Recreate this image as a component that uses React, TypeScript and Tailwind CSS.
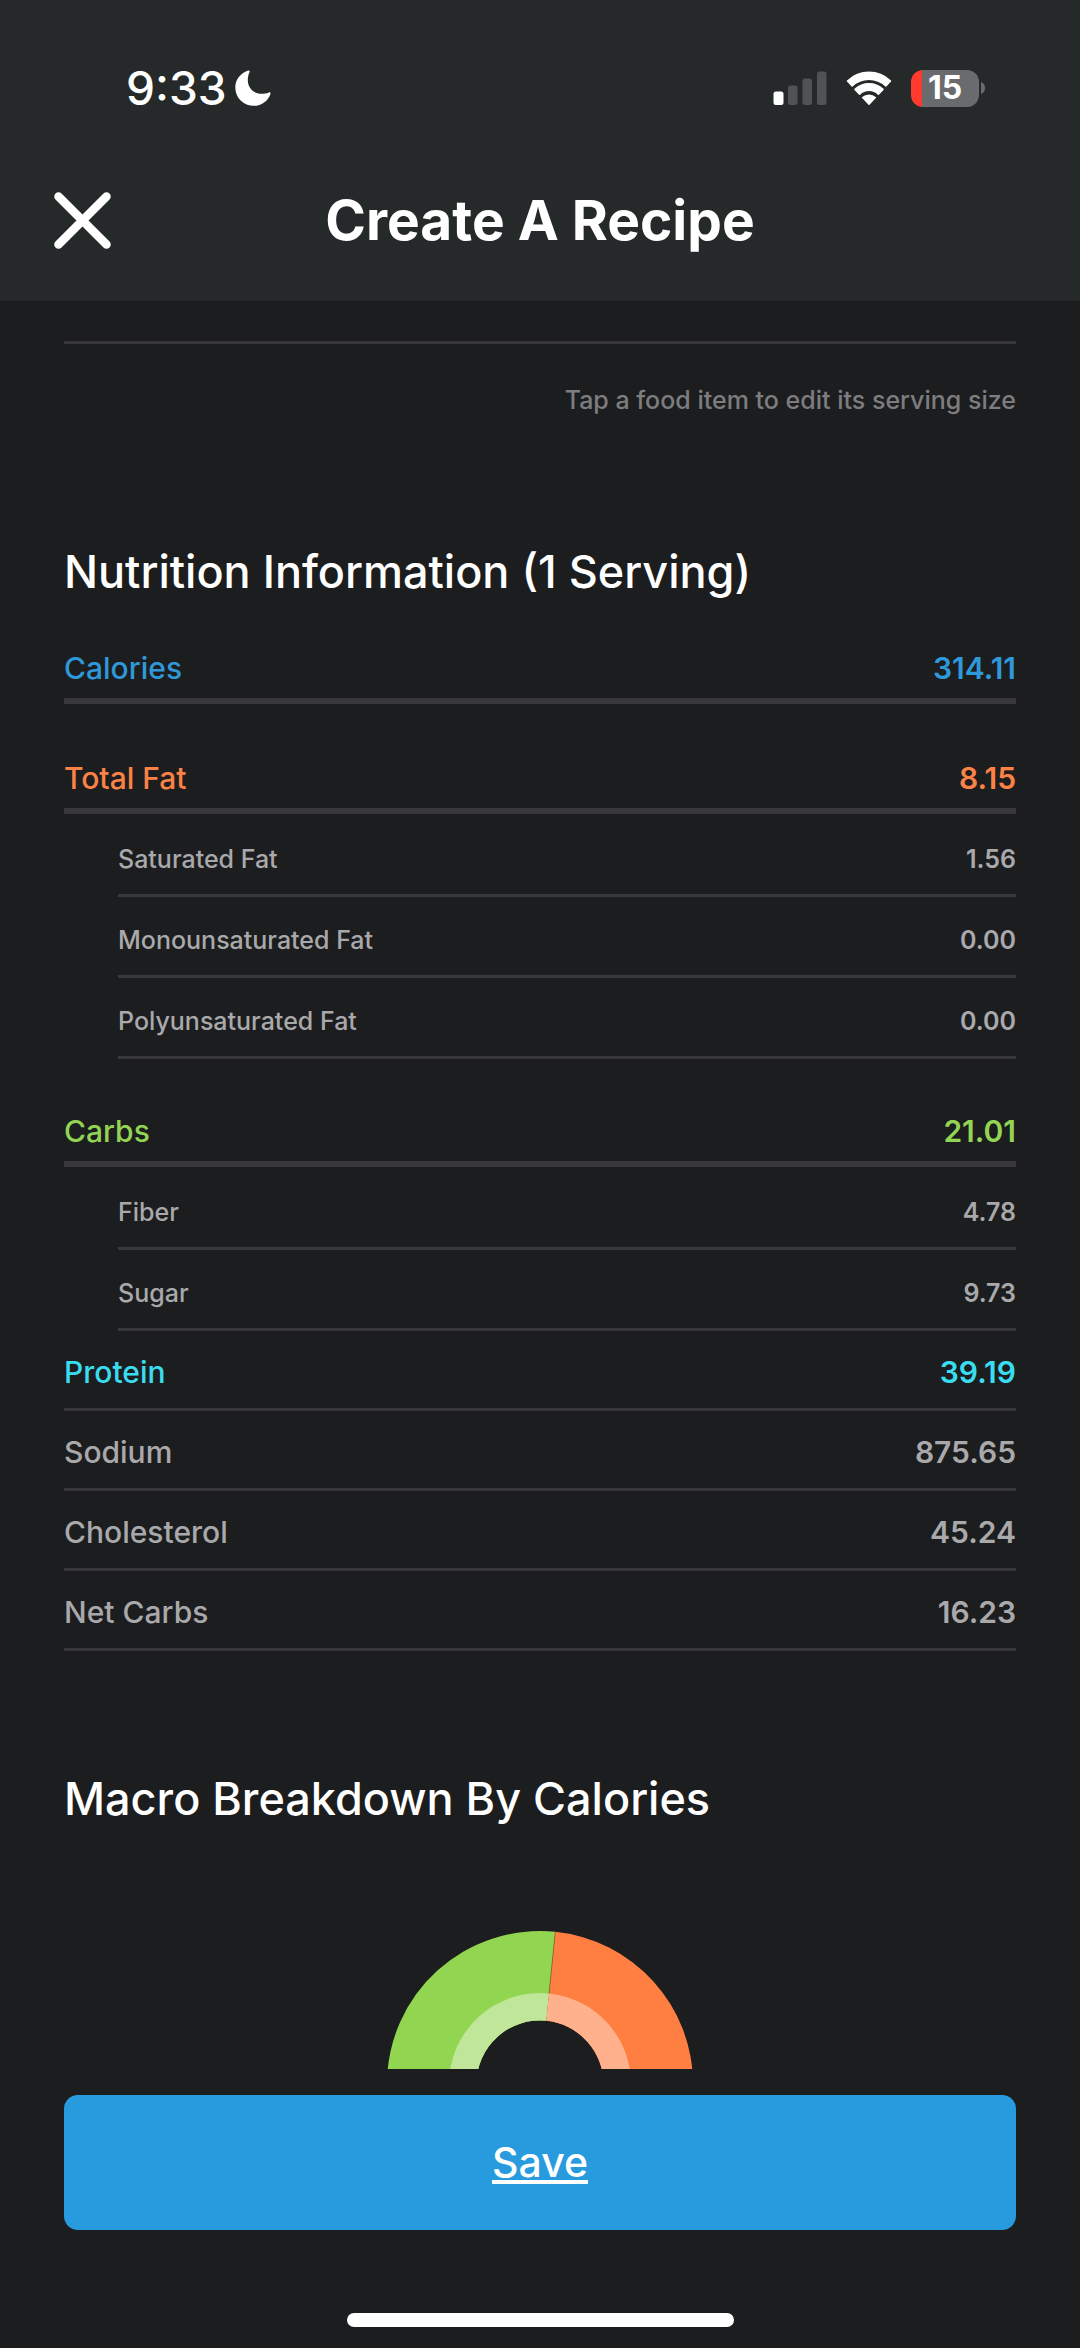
type RowKind = 'group' | 'sub' | 'plain';

interface NutritionRow {
  label: string;
  value: string;
  kind: RowKind;
  color: string;
}

const muted = 'text-[#a9a9ab]';

const rows: NutritionRow[] = [
  { label: 'Calories', value: '314.11', kind: 'group', color: 'text-[#2f98d9]' },
  { label: 'Total Fat', value: '8.15', kind: 'group', color: 'text-[#fb8247]' },
  { label: 'Saturated Fat', value: '1.56', kind: 'sub', color: muted },
  { label: 'Monounsaturated Fat', value: '0.00', kind: 'sub', color: muted },
  { label: 'Polyunsaturated Fat', value: '0.00', kind: 'sub', color: muted },
  { label: 'Carbs', value: '21.01', kind: 'group', color: 'text-[#94d455]' },
  { label: 'Fiber', value: '4.78', kind: 'sub', color: muted },
  { label: 'Sugar', value: '9.73', kind: 'sub', color: muted },
  { label: 'Protein', value: '39.19', kind: 'plain', color: 'text-[#3adcf0]' },
  { label: 'Sodium', value: '875.65', kind: 'plain', color: muted },
  { label: 'Cholesterol', value: '45.24', kind: 'plain', color: muted },
  { label: 'Net Carbs', value: '16.23', kind: 'plain', color: muted },
];

const cellStyles: Record<RowKind, string> = {
  group: 'border-b-6 border-[#38383a] pt-[52px] pb-[10px] text-[30px] leading-[40px]',
  sub: 'border-b-3 border-[#38383a] pt-[27px] pb-[19px] text-[25px] leading-[32px]',
  plain: 'border-b-3 border-[#38383a] pt-[21px] pb-[16px] text-[30px] leading-[40px]',
};

function MoonIcon() {
  return (
    <svg width="36" height="36" viewBox="0 0 36 36" fill="currentColor" aria-hidden="true">
      <path d="M13.2.6C5 3.5.3 10 .3 17.5.3 28 8.5 35.8 19 35.8c7.500 0 13.800-4.800 16.400-11.600.4-1.400-.4-2.200-1.600-1.800-2.300 1-4.800 1.400-7 1.400-8.300 0-14-5.800-14-13.800 0-3 .6-5.500 1.700-7.800.5-1.200-.1-1.900-1.300-1.600Z" />
    </svg>
  );
}

function SignalIcon() {
  return (
    <svg width="54" height="34" viewBox="0 0 54 34" aria-label="Signal">
      <rect x="0.500" y="20.500" width="10" height="13.500" rx="2.500" fill="#fff" />
      <rect x="15" y="14.500" width="9.500" height="19.500" rx="2.500" fill="#505354" />
      <rect x="29.500" y="7.500" width="9.500" height="26.500" rx="2.500" fill="#505354" />
      <rect x="44" y="0.500" width="9.500" height="33.500" rx="2.500" fill="#505354" />
    </svg>
  );
}

function WifiIcon() {
  return (
    <svg
      width="46"
      height="34"
      viewBox="0 0 46 34"
      fill="currentColor"
      stroke="currentColor"
      strokeWidth="1.5"
      strokeLinejoin="round"
      aria-label="Wi-Fi"
    >
      <path d="M1.500 10A31 31 0 0 1 44.500 10L39.800 15A24.400 24.400 0 0 0 6.200 15Z" />
      <path d="M9 18.400A20 20 0 0 1 37 18.400L32.400 23.200A13.400 13.400 0 0 0 13.600 23.200Z" />
      <path d="M16.700 26.600A9.500 9.500 0 0 1 29.300 26.600L23 33.200Z" />
    </svg>
  );
}

function Battery() {
  return (
    <div className="flex items-center gap-0.5">
      <div className="flex h-[37px] w-[68px] items-center justify-center rounded-[12px] bg-linear-to-r from-[#ff3b30] from-[11px] to-[#6a6b6e] to-[11px] text-[32px] leading-none font-bold">
        15
      </div>
      <svg width="4" height="12" viewBox="0 0 4 12" aria-hidden="true">
        <path d="M0 0C2.500 1 4 3.300 4 6S2.500 11 0 12Z" fill="#6a6b6e" />
      </svg>
    </div>
  );
}

function StatusBar() {
  return (
    <div className="flex h-14 items-center justify-between pr-[41px] pl-[72px]">
      <div className="flex items-center gap-2">
        <span className="text-[46px] leading-none font-medium">9:33</span>
        <MoonIcon />
      </div>
      <div className="flex items-center gap-[19px]">
        <SignalIcon />
        <WifiIcon />
        <Battery />
      </div>
    </div>
  );
}

function Header() {
  return (
    <header className="bg-[#25292a] px-[54px] pt-[60px] pb-[49px]">
      <StatusBar />
      <div className="mt-[72px] grid grid-cols-[57px_1fr_57px] items-center">
        <button type="button" aria-label="Close">
          <svg width="57" height="57" viewBox="0 0 57 57" stroke="currentColor" strokeWidth="8.500" strokeLinecap="round">
            <path d="M4.500 4.500l48 48M52.500 4.500l-48 48" />
          </svg>
        </button>
        <h1 className="text-center text-[55px] leading-[64px] font-bold">Create A Recipe</h1>
      </div>
    </header>
  );
}

function NutritionTable() {
  return (
    <table className="w-full border-separate border-spacing-0">
      {rows.map((row) => (
        <tbody key={row.label} className={row.color}>
          <tr>
            {row.kind === 'sub' && <td className="w-[54px] p-0" />}
            <th scope="row" colSpan={row.kind === 'sub' ? 1 : 2} className={`${cellStyles[row.kind]} text-left font-medium`}>
              {row.label}
            </th>
            <td className={`${cellStyles[row.kind]} text-right font-semibold`}>{row.value}</td>
          </tr>
          {row.kind === 'group' && (
            <tr aria-hidden="true">
              <td colSpan={3} className="h-0.5 p-0" />
            </tr>
          )}
        </tbody>
      ))}
    </table>
  );
}

// Only the upper part of the donut is scrolled into view above the save bar.
function MacroChart() {
  return (
    <svg className="mx-auto block" width="306" height="138" viewBox="0 0 306 138" role="img" aria-label="Macro Breakdown By Calories">
      <path d="M0 153A153 153 0 0 1 168.300 .8L159.300 89.800A63.500 63.500 0 0 0 89.500 153Z" fill="#92d551" />
      <path d="M62 153A91 91 0 0 1 162.100 62.500L159.300 89.800A63.500 63.500 0 0 0 89.500 153Z" fill="#bfe699" />
      <path d="M168.300 .8A153 153 0 0 1 306 153L216.500 153A63.500 63.500 0 0 0 159.300 89.800Z" fill="#fe7f41" />
      <path d="M162.100 62.500A91 91 0 0 1 244 153L216.500 153A63.500 63.500 0 0 0 159.300 89.800Z" fill="#ffb08c" />
      <path d="M168.300 .8L162.100 62.500" stroke="#8a6a2a" strokeWidth="0.800" />
    </svg>
  );
}

export default function App() {
  return (
    <div className="flex min-h-screen flex-col bg-[#1c1d1e] font-['Inter',sans-serif] text-white">
      <Header />

      <main className="px-16 pt-10">
        <hr className="border-t-3 border-[#38383a]" />
        <p className="mt-10 text-right text-[25px] leading-[32px] font-medium text-[#7d7d80]">
          Tap a food item to edit its serving size
        </p>

        <section className="mt-[134px]">
          <h2 className="mb-0.5 text-[45px] leading-[44px] font-medium">Nutrition Information (1 Serving)</h2>
          <NutritionTable />
        </section>

        <section className="mt-[126px]">
          <h2 className="text-[45px] leading-[44px] font-medium">Macro Breakdown By Calories</h2>
          <div className="mt-[110px]">
            <MacroChart />
          </div>
        </section>
      </main>

      <footer className="mt-auto px-16 pt-6 pb-[21px]">
        <button
          type="button"
          className="flex h-[135px] w-full items-center justify-center rounded-[14px] bg-[#289bdf] pb-0.5 text-[41px] leading-[48px] font-medium underline decoration-4 underline-offset-[3px] [text-decoration-skip-ink:none]"
        >
          Save
        </button>
        <div className="mx-auto mt-[83px] h-3.5 w-[387px] rounded-full bg-white" />
      </footer>
    </div>
  );
}
